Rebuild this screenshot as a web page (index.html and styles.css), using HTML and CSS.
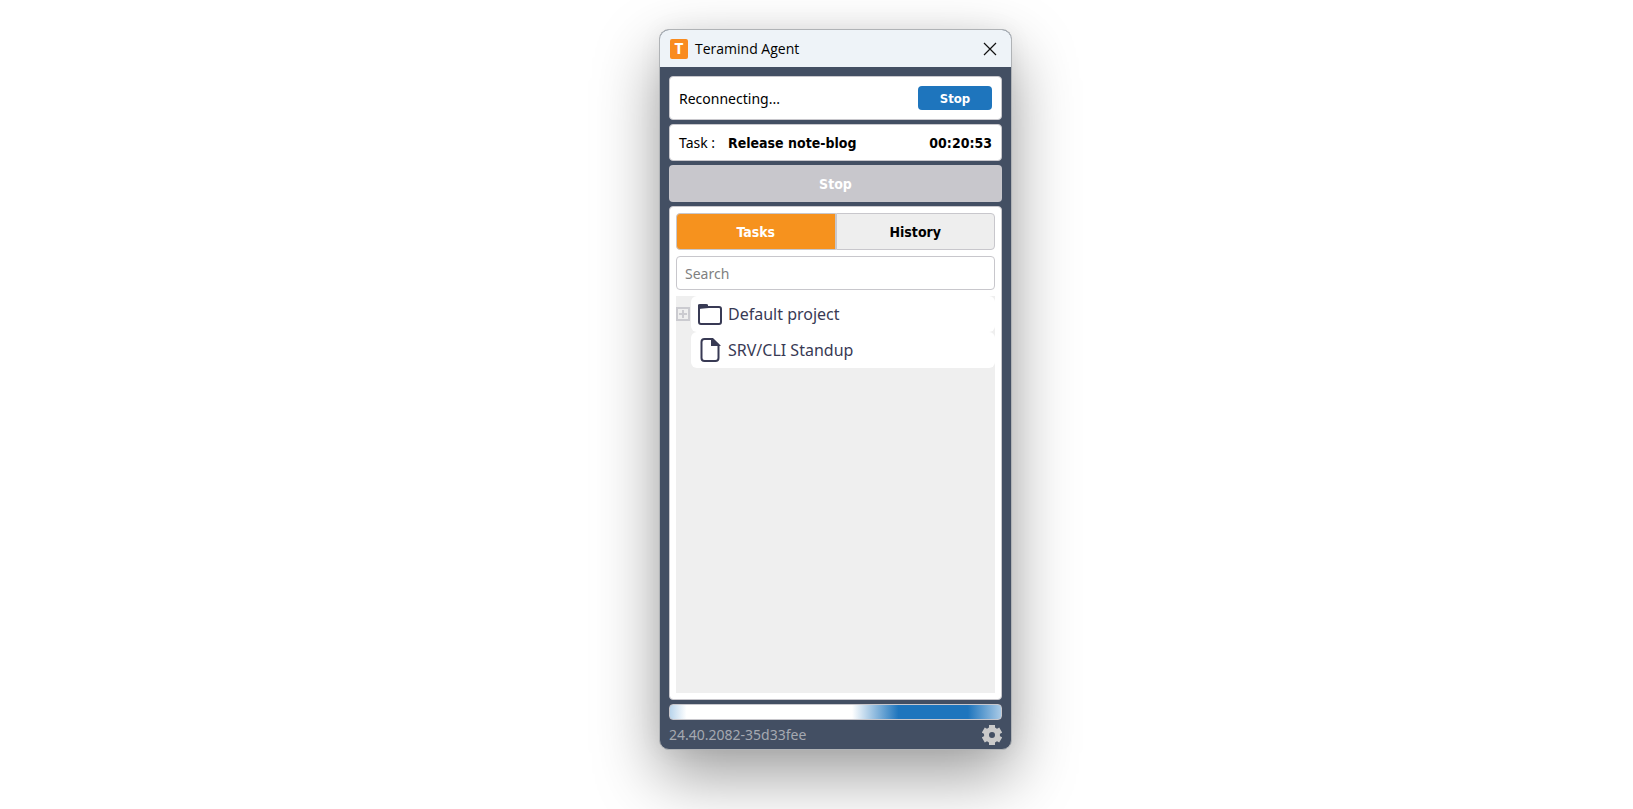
FILE: index.html
```
<!DOCTYPE html>
<html lang="en">
<head>
    <meta charset="UTF-8">
    <meta name="viewport" content="width=device-width, initial-scale=1.0">
    <title>Teramind Agent</title>
    <link rel="stylesheet" href="styles.css">
</head>
<body>
    <div class="window">
        <header class="titlebar">
            <span class="logo">T</span>
            <h1>Teramind Agent</h1>
            <button type="button" class="close-btn" aria-label="Close">
                <svg width="14" height="14" viewBox="0 0 14 14" fill="none" stroke="#111" stroke-width="1.2">
                    <path d="M1 1L13 13M13 1L1 13"/>
                </svg>
            </button>
        </header>

        <main class="content">
            <section class="card status">
                <span>Reconnecting...</span>
                <button type="button" class="stop-btn">Stop</button>
            </section>

            <section class="card task">
                <span class="task-label">Task :</span>
                <strong>Release note-blog</strong>
                <strong class="timer">00:20:53</strong>
            </section>

            <button type="button" class="stop-task" disabled>Stop</button>

            <section class="panel">
                <div class="tabs">
                    <button type="button" class="tab active">Tasks</button>
                    <button type="button" class="tab">History</button>
                </div>
                <input type="text" class="search" placeholder="Search" aria-label="Search">
                <ul class="tree">
                    <li>
                        <button type="button" class="expander" aria-label="Expand">
                            <svg width="14" height="14" viewBox="0 0 14 14" fill="none" stroke="#cbcbd0" stroke-width="2">
                                <rect x="1" y="1" width="12" height="12"/>
                                <path d="M3 7H11M7 3V11"/>
                            </svg>
                        </button>
                        <div class="item">
                            <svg width="24" height="24" viewBox="0 0 24 24" fill="none" stroke="#383a54" stroke-width="2">
                                <rect x="1" y="5" width="22" height="17" rx="2"/>
                                <path d="M0 7V3Q0 2 2 2H8Q10 2 10 3V4L11 6Z" fill="#383a54" stroke="none"/>
                            </svg>
                            <span>Default project</span>
                        </div>
                    </li>
                    <li>
                        <span class="expander"></span>
                        <div class="item">
                            <svg width="24" height="24" viewBox="0 0 24 24" fill="none" stroke="#383a54" stroke-width="2">
                                <path d="M6.500 1H14.500L20.500 7V20Q20.500 23 17.500 23H6.500Q3.500 23 3.500 20V4Q3.500 1 6.500 1Z"/>
                                <path d="M14 1V7H20.500Z" fill="#383a54"/>
                            </svg>
                            <span>SRV/CLI Standup</span>
                        </div>
                    </li>
                </ul>
            </section>

            <div class="progress" role="progressbar" aria-label="Connecting"></div>
        </main>

        <footer class="footer">
            <span>24.40.2082-35d33fee</span>
            <button type="button" class="settings-btn" aria-label="Settings">
                <svg width="20" height="20" viewBox="0 0 20 20" fill="none" stroke="#cacaca">
                    <circle cx="10" cy="10" r="5.500" stroke-width="5"/>
                    <path stroke-width="6" d="M10 0V4M10 16V20M1.300 5L4.800 7M15.200 13L18.700 15M1.300 15L4.800 13M15.200 7L18.700 5"/>
                </svg>
            </button>
        </footer>
    </div>
</body>
</html>
```
FILE: styles.css
```
* {
    box-sizing: border-box;
}

body {
    margin: 0;
    min-height: 100vh;
    padding: 29px 0 59px 38px;
    display: flex;
    justify-content: center;
    background-color: #fff;
    font-family: Tahoma, "Noto Sans", sans-serif;
    font-size: 14px;
    color: #000;
    overflow: hidden;
}

button {
    font-family: Tahoma, "DejaVu Sans Condensed", sans-serif;
    font-size: 14px;
    font-weight: bold;
    padding: 0;
    border: none;
    background: none;
    cursor: pointer;
}

strong {
    font-family: Tahoma, "DejaVu Sans Condensed", sans-serif;
}

svg {
    display: block;
    flex: none;
}

.window {
    width: 353px;
    display: flex;
    flex-direction: column;
    border: 1px solid #b0b3b6;
    border-radius: 10px;
    background-color: #434f63;
    box-shadow: 0 26px 64px rgba(0, 0, 0, 0.38), 0 0 24px rgba(0, 0, 0, 0.05);
    overflow: hidden;
}

.titlebar {
    display: flex;
    align-items: center;
    height: 37px;
    padding: 0 14px 0 10px;
    background-color: #eef3f8;
}

.titlebar h1 {
    flex: 1;
    margin: 0 0 0 7px;
    font-family: "Segoe UI", "Open Sans", sans-serif;
    font-size: 14px;
    font-weight: normal;
}

.logo {
    width: 18px;
    height: 20px;
    border-radius: 2px;
    background-color: #f98b1f;
    color: #fff;
    font-family: Roboto, sans-serif;
    font-size: 14px;
    font-weight: 900;
    line-height: 20px;
    text-align: center;
}

.content {
    flex: 1;
    display: flex;
    flex-direction: column;
    gap: 4px;
    padding: 9px 9px 0;
}

.card {
    display: flex;
    align-items: center;
    padding: 0 9px;
    border: 1px solid #c8c7cc;
    border-radius: 4px;
    background-color: #fff;
}

.status {
    justify-content: space-between;
    height: 44px;
}

.stop-btn {
    width: 74px;
    height: 24px;
    border-radius: 4px;
    background-color: #1e75bd;
    color: #fff;
    font-size: 13px;
}

.task {
    height: 37px;
}

.task-label {
    width: 49px;
}

.timer {
    margin-left: auto;
}

.stop-task {
    height: 37px;
    border-radius: 4px;
    background-color: #c8c7cc;
    color: #fff;
    cursor: default;
}

.panel {
    flex: 1;
    display: flex;
    flex-direction: column;
    gap: 6px;
    padding: 6px;
    border: 1px solid #c8c7cc;
    border-radius: 4px;
    background-color: #fff;
}

.tabs {
    display: flex;
    height: 37px;
}

.tab {
    flex: 1;
    border: 1px solid #c8c7cc;
    border-radius: 0 4px 4px 0;
    background-color: #eee;
    color: #000;
}

.tab.active {
    border-radius: 4px 0 0 4px;
    background-color: #f6921e;
    color: #fff;
}

.search {
    height: 34px;
    padding: 0 8px;
    border: 1px solid #c8c7cc;
    border-radius: 4px;
    font-family: inherit;
    font-size: 14px;
}

.search::placeholder {
    color: #808080;
}

.tree {
    flex: 1;
    margin: 0;
    padding: 0;
    list-style: none;
    background-color: #efefef;
}

.tree li {
    display: flex;
    align-items: center;
}

.expander {
    width: 15px;
}

.item {
    flex: 1;
    display: flex;
    align-items: center;
    gap: 6px;
    height: 36px;
    padding-left: 7px;
    border-radius: 6px;
    background-color: #fff;
    color: #383a54;
    font-size: 16px;
}

.progress {
    height: 16px;
    border: 1px solid #c8c7cc;
    border-radius: 4px;
    background: linear-gradient(to right, #b9d5ec 0%, #fff 5%, #fff 55%, #1e75bd 69%, #1e75bd 90%, #a9cae6 100%);
}

.footer {
    display: flex;
    align-items: center;
    justify-content: space-between;
    height: 29px;
    padding: 0 9px;
    color: #a5a9b1;
}
```
